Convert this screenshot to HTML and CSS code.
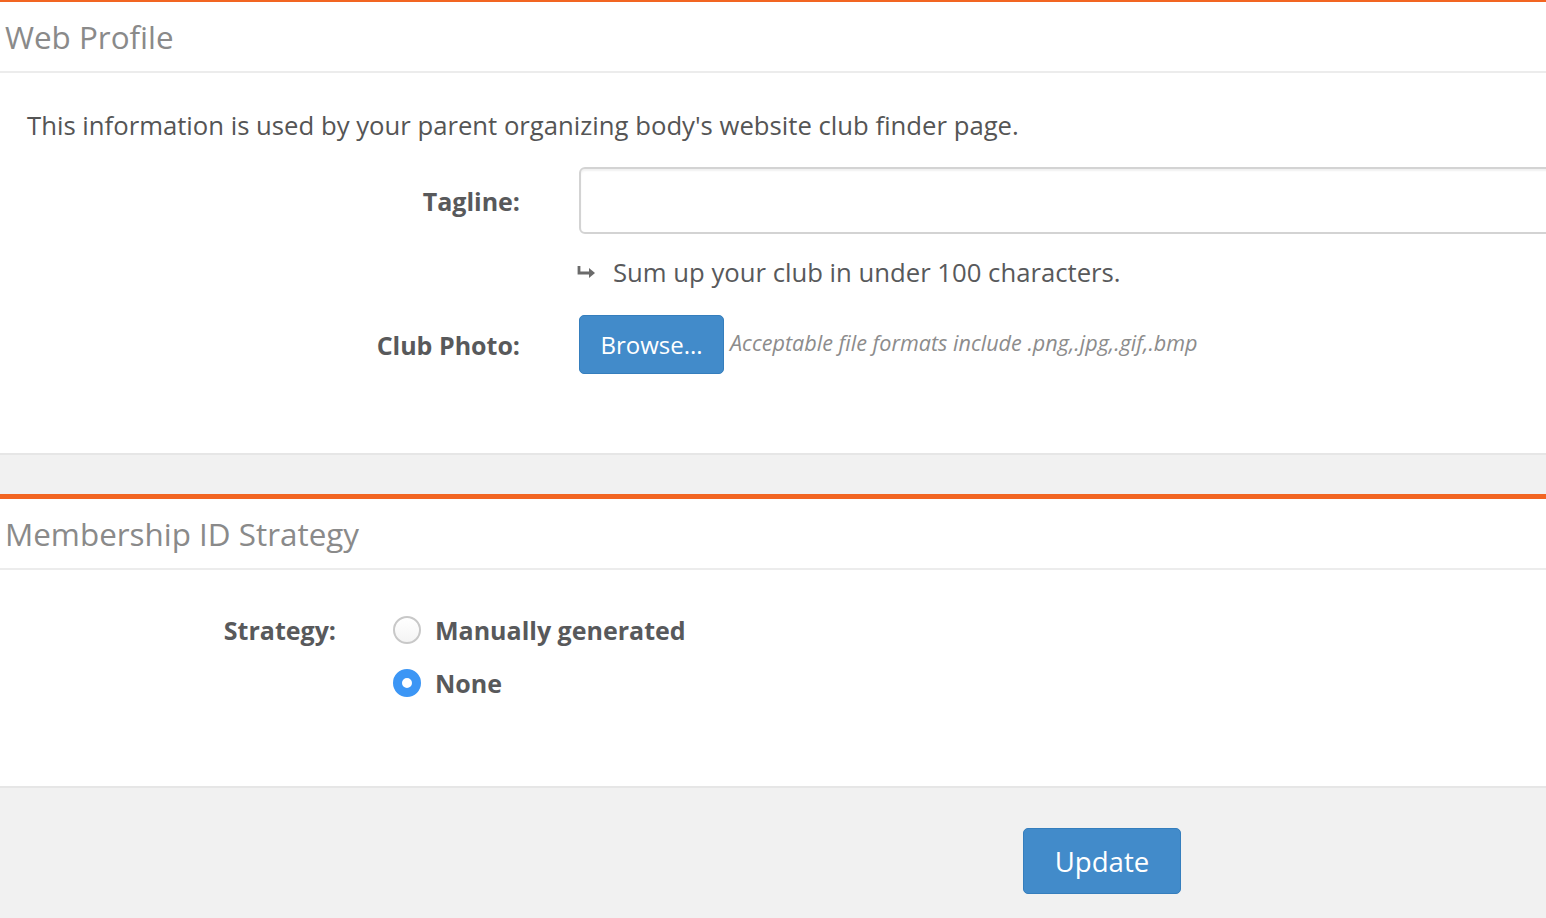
FILE: index.html
```html
<!DOCTYPE html>
<html>
<head>
<meta charset="utf-8">
<link rel="stylesheet" href="styles.css">
</head>
<body>
<section class="panel panel-first">
  <div class="panel-head"><h2>Web Profile</h2></div>
  <div class="panel-body body-web">
    <p class="intro">This information is used by your parent organizing body's website club finder page.</p>
    <div class="form-row row-tagline">
      <label class="lbl">Tagline:</label>
      <div class="field"><input type="text" class="text-input"></div>
    </div>
    <div class="form-row row-help">
      <div></div>
      <div class="help"><svg class="arrow" width="20" height="14" viewBox="0 0 20 14"><path d="M2 1 V8 H15" fill="none" stroke="#6b6b6b" stroke-width="2.8"/><path d="M12 3 L18 8 L12 13 Z" fill="#6b6b6b"/></svg>Sum up your club in under 100 characters.</div>
    </div>
    <div class="form-row row-photo">
      <label class="lbl">Club Photo:</label>
      <div class="field photo-field">
        <button class="btn btn-browse">Browse...</button>
        <span class="formats">Acceptable file formats include .png,.jpg,.gif,.bmp</span>
      </div>
    </div>
  </div>
</section>
<div class="gap"></div>
<section class="panel panel-second">
  <div class="panel-head"><h2>Membership ID Strategy</h2></div>
  <div class="panel-body body-strategy">
    <div class="strategy-row">
      <label class="lbl lbl-strategy">Strategy:</label>
      <div class="radios">
        <div class="radio-item"><span class="radio"></span><span class="radio-text">Manually generated</span></div>
        <div class="radio-item"><span class="radio checked"></span><span class="radio-text">None</span></div>
      </div>
    </div>
  </div>
</section>
<div class="footer">
  <button class="btn btn-update">Update</button>
</div>
</body>
</html>
```
FILE: styles.css
```css
html, body {
  margin: 0;
  padding: 0;
  background: #f1f1f1;
  font-family: "Open Sans", "Liberation Sans", sans-serif;
  color: #58595b;
  overflow: hidden;
}
.panel {
  background: #fff;
}
.panel-first {
  border-top: 2px solid #f26522;
}
.panel-second {
  border-top: 5px solid #f26522;
}
.panel-head {
  border-bottom: 2px solid #ececec;
  padding: 0 5px;
  height: 69px;
  display: flex;
  align-items: center;
}
.panel-head h2 {
  margin: 0;
  font-weight: 400;
  font-size: 31.4px;
  color: #8a8a8a;
  line-height: 1;
}
.panel-body {
  border-bottom: 2px solid #e6e6e6;
}
.body-web {
  height: 382px;
  box-sizing: border-box;
  padding-top: 35px;
}
.intro {
  margin: 0 0 0 27px;
  font-size: 25.7px;
  line-height: 36px;
  color: #555;
}
.form-row {
  display: grid;
  grid-template-columns: 520px 1fr;
  column-gap: 59px;
  align-items: center;
}
.lbl {
  text-align: right;
  font-weight: 700;
  font-size: 25px;
  color: #58595b;
}
.row-tagline {
  margin-top: 23px;
}
.text-input {
  display: block;
  width: calc(100% + 20px);
  height: 67px;
  box-sizing: border-box;
  border: 2px solid #d3d3d3;
  border-radius: 6px;
  box-shadow: inset 0 2px 2px rgba(0,0,0,0.06);
  font-size: 26px;
  padding: 0 14px;
  font-family: inherit;
}
.row-help {
  margin-top: 19px;
}
.help {
  font-size: 25.7px;
  line-height: 40px;
  color: #58595b;
  margin-left: -2px;
  display: flex;
  align-items: center;
}
.arrow {
  flex: none;
  margin-right: 16px;
  margin-top: -2px;
}
.row-photo {
  margin-top: 22px;
}
.photo-field {
  display: flex;
  align-items: center;
  gap: 6px;
}
.btn {
  background: #428bca;
  border: 1px solid #357ebd;
  color: #fff;
  font-family: inherit;
  border-radius: 5px;
  cursor: pointer;
}
.btn-browse {
  width: 145px;
  height: 59px;
  font-size: 24px;
  padding: 0;
}
.formats {
  font-style: italic;
  font-size: 21.6px;
  color: #8c8c8c;
  margin-top: -4px;
}
.gap {
  height: 39px;
}
.body-strategy {
  height: 218px;
  box-sizing: border-box;
  padding-top: 44px;
}
.strategy-row {
  display: grid;
  grid-template-columns: 336px 1fr;
  column-gap: 57px;
  align-items: start;
}
.lbl-strategy {
  line-height: 32px;
}
.radios {
  display: flex;
  flex-direction: column;
  gap: 21px;
}
.radio-item {
  display: flex;
  align-items: center;
  gap: 14px;
  height: 32px;
}
.radio {
  width: 28px;
  height: 28px;
  box-sizing: border-box;
  border-radius: 50%;
  border: 2px solid #c8c8c8;
  background: linear-gradient(#fff, #f4f4f4);
  flex: none;
}
.radio.checked {
  border: 9px solid #3c96f5;
  background: #fff;
}
.radio-text {
  font-weight: 700;
  font-size: 25px;
  color: #58595b;
}
.footer {
  height: 131px;
  display: flex;
  justify-content: flex-start;
  padding-left: 1023px;
  padding-top: 40px;
  box-sizing: border-box;
}
.btn-update {
  width: 158px;
  height: 66px;
  font-size: 27.6px;
  padding: 0;
}
```
